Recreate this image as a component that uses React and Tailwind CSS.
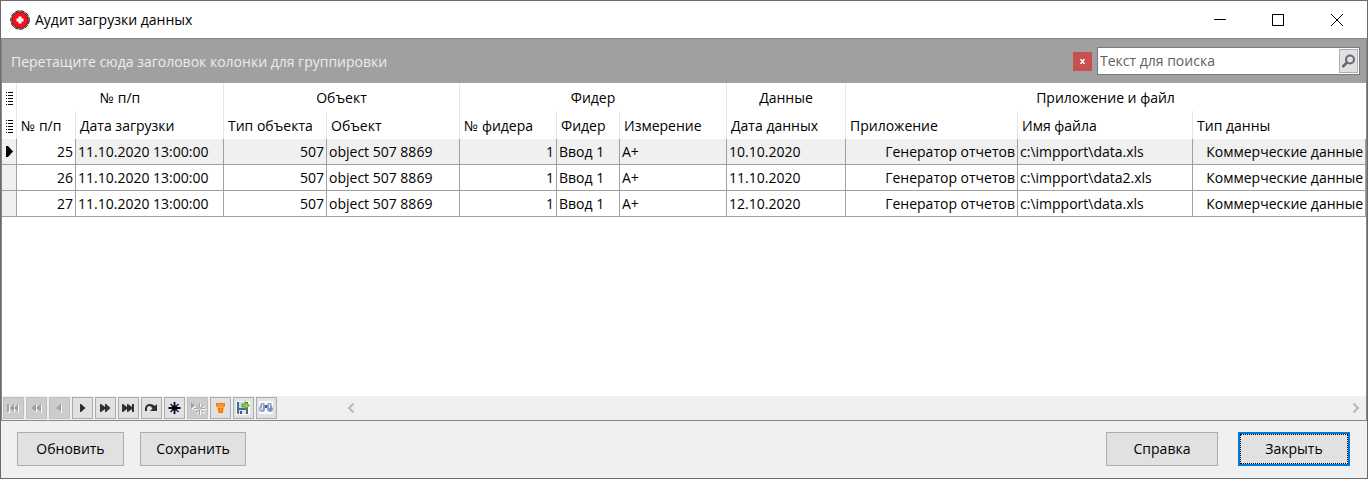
import { useState } from 'react';

const groups = [
  { title: '№ п/п', span: 2 },
  { title: 'Объект', span: 2 },
  { title: 'Фидер', span: 3 },
  { title: 'Данные', span: 1 },
  { title: 'Приложение и файл', span: 3 },
];

const columns = [
  { key: 'id', title: '№ п/п', width: 'w-[59px]', right: true },
  { key: 'loaded', title: 'Дата загрузки', width: 'w-[148px]' },
  { key: 'objectType', title: 'Тип объекта', width: 'w-[103px]', right: true },
  { key: 'object', title: 'Объект', width: 'w-[133px]' },
  { key: 'feederNo', title: '№ фидера', width: 'w-[97px]', right: true },
  { key: 'feeder', title: 'Фидер', width: 'w-[63px]' },
  { key: 'measure', title: 'Измерение', width: 'w-[107px]' },
  { key: 'dataDate', title: 'Дата данных', width: 'w-[119px]' },
  { key: 'app', title: 'Приложение', width: 'w-[172px]', right: true },
  { key: 'file', title: 'Имя файла', width: 'w-[175px]' },
  { key: 'dataType', title: 'Тип данны', width: '', right: true },
];

const common = {
  loaded: '11.10.2020 13:00:00',
  objectType: 507,
  object: 'object 507 8869',
  feederNo: 1,
  feeder: 'Ввод 1',
  measure: 'A+',
  app: 'Генератор отчетов',
  dataType: 'Коммерческие данные',
};

const rows = [
  { ...common, id: 25, dataDate: '10.10.2020', file: 'c:\\impport\\data.xls' },
  { ...common, id: 26, dataDate: '11.10.2020', file: 'c:\\impport\\data2.xls' },
  { ...common, id: 27, dataDate: '12.10.2020', file: 'c:\\impport\\data.xls' },
];

function Icon({ children }) {
  return (
    <svg width="19" height="20" viewBox="0 0 19 20" fill="currentColor" aria-hidden="true">
      {children}
    </svg>
  );
}

// Greyed out arrows get a white edge on the right and bottom side
function EmbossedPath({ d }) {
  return (
    <g>
      <path d={d} fill="#fff" transform="translate(1 1)" />
      <path d={d} />
    </g>
  );
}

const navButtons = [
  { label: 'Первая запись', disabled: true, icon: <EmbossedPath d="M3 6h2v8H3zM10 6v8l-4.500-4zM14 6v8l-4-4z" /> },
  { label: 'Предыдущая страница', disabled: true, icon: <EmbossedPath d="M9 6v8l-5-4zM14 6v8l-5-4z" /> },
  { label: 'Предыдущая запись', disabled: true, icon: <EmbossedPath d="M11 6v8l-5-4z" /> },
  { label: 'Следующая запись', icon: <path d="M7 6v8h1l4.500-4L8 6z" /> },
  { label: 'Следующая страница', icon: <path d="M4 6v8h1l4-3v3h1l4.500-4L10 6H9v3L5 6z" /> },
  { label: 'Последняя запись', icon: <path d="M3 6v8h1l4-3v3h1l4-3v3h2V6h-2v3L9 6H8v3L4 6z" /> },
  {
    label: 'Обновить запись',
    icon: <path d="M3 13v-2c0-3 2-5 5-5 2 0 4 1 5 2l2-2v7H8l2.500-2.500C9.500 9 8.500 8 7.500 8 6 8 5 9 5 11v2z" />,
  },
  {
    label: 'Добавить запись',
    icon: (
      <g>
        <path d="M5.500 6l8 8M13.500 6l-8 8" stroke="#000080" strokeWidth="1.200" />
        <path d="M9.500 4v12M3.500 10h12" stroke="#000" strokeWidth="1.800" />
        <circle cx="9.500" cy="10" r="2.500" fill="#000" />
      </g>
    ),
  },
  {
    label: 'Отменить добавление',
    disabled: true,
    icon: (
      <g>
        <EmbossedPath d="M3 4v7l4-3.500z" />
        <path d="M12.500 6v11M7 11.500h11M9 8l8 8M17 8l-8 8" stroke="#fff" />
        <path d="M11.500 5v11M6 10.500h11M8 7l7 7M15 7l-7 7" stroke="currentColor" />
        <circle cx="11.500" cy="10.500" r="1.500" fill="#ccc" />
      </g>
    ),
  },
  {
    label: 'Фильтр',
    icon: (
      <g>
        <path d="M5 5h9v3l-1.500 1.500L12 15H7.500L6.500 9.500 5 8z" fill="#f57900" />
        <path d="M6 6h7v1.500H6z" fill="#ff9a35" />
        <path d="M6.500 8.500h6v1h-6z" fill="#ffd09a" />
        <path d="M8.500 10.500h2V14h-2z" fill="#ff9425" />
      </g>
    ),
  },
  {
    label: 'Экспорт',
    icon: (
      <g>
        <rect x="2" y="3" width="14" height="14" fill="#f8f8f8" />
        <path d="M3 4h11v12H4l-1-1z" fill="#4c6890" />
        <path d="M5 4h6v6H5z" fill="#c8daf0" />
        <path d="M5 12h7v4H5z" fill="#dfe5ed" />
        <path d="M6 13h2v3H6z" fill="#3f597e" />
        <path d="M8 6h3V3.500L15.500 7.500 11 11.500V9H8z" fill="#8fce43" stroke="#4d9420" strokeWidth=".8" />
      </g>
    ),
  },
  {
    label: 'Поиск',
    icon: (
      <g>
        <rect x="2" y="3" width="14" height="13" fill="#fafafd" />
        <path d="M4 5h3l1 2h2l1-2h3l2 6c0 2-1 3-3 3s-3-1-3-3v-1H8v1c0 2-1 3-3 3s-3-1-3-3z" fill="#8ba0c4" />
        <path d="M5 6h1v5H5zM12 6h1v5h-1z" fill="#e4ecfa" />
        <path d="M8 7h2v3H8z" fill="#465c86" />
        <circle cx="4.500" cy="11" r="1.500" fill="#c3d3ef" />
        <circle cx="13.500" cy="11" r="1.500" fill="#6d8bc0" />
      </g>
    ),
  },
];

function ColumnMenuIcon() {
  return (
    <svg width="8" height="13" viewBox="0 0 8 13" shapeRendering="crispEdges" aria-hidden="true">
      {[0, 3, 6, 9, 12].map((y) => (
        <path key={y} d={`M0 ${y}h1v1H0zM2 ${y}h5v1H2z`} />
      ))}
    </svg>
  );
}

function TitleBar() {
  return (
    <header className="flex h-[37px] items-center bg-white pr-px pl-[9px]">
      <svg width="20" height="20" viewBox="0 0 20 20" aria-hidden="true">
        <circle cx="10" cy="10" r="9.500" fill="#9a9a9a" />
        <circle cx="10" cy="10" r="9.300" fill="none" stroke="#252525" strokeDasharray="4 1.500" />
        <circle cx="10" cy="10" r="8" fill="#ee141b" stroke="#a80c12" />
        <path d="M8.500 6.500h3v2h2v3h-2v2h-3v-2h-2v-3h2z" fill="#fff" />
      </svg>
      <h1 className="ml-[5px] flex-1">Аудит загрузки данных</h1>
      <button aria-label="Свернуть" className="flex h-full w-[58px] items-center justify-center">
        <svg width="12" height="12" shapeRendering="crispEdges"><path d="M0 5h12v1H0z" /></svg>
      </button>
      <button aria-label="Развернуть" className="flex h-full w-[58px] items-center justify-center">
        <svg width="12" height="12" shapeRendering="crispEdges">
          <path d="M.5.500h11v11H.5z" fill="none" stroke="#000" />
        </svg>
      </button>
      <button aria-label="Закрыть окно" className="flex h-full w-[59px] items-center justify-center">
        <svg width="12" height="12"><path d="M0 0l12 12M12 0L0 12" stroke="#000" /></svg>
      </button>
    </header>
  );
}

function GroupPanel() {
  const [search, setSearch] = useState('');

  return (
    <div className="flex h-11 items-center bg-[#a0a0a0] pr-1.5 pl-[9px]">
      <p className="flex-1 pt-0.5 text-[#ececec]">Перетащите сюда заголовок колонки для группировки</p>
      <button
        aria-label="Очистить"
        onClick={() => setSearch('')}
        className="mr-[5px] flex h-[19px] w-[19px] items-center justify-center bg-[#c75050]"
      >
        <svg width="5" height="5" viewBox="0 0 5 5"><path d="M.5 0l4 5M4.500 0l-4 5" stroke="#fff" strokeWidth="1.500" /></svg>
      </button>
      <div className="flex h-7 w-[263px] border border-[#7a7a7a] bg-white p-px">
        <input
          aria-label="Текст для поиска"
          placeholder="Текст для поиска"
          value={search}
          onChange={(e) => setSearch(e.target.value)}
          className="min-w-0 flex-1 px-px outline-none placeholder:text-[#5f5f5f]"
        />
        <button aria-label="Найти" className="flex w-[19px] items-center justify-center border border-[#adadad] bg-[#e1e1e1]">
          <svg width="15" height="15" viewBox="0 0 15 15" fill="none" stroke="#666674">
            <circle cx="9" cy="5.500" r="4" strokeWidth="2" />
            <path d="M6 8.500L1.500 13" strokeWidth="2.500" />
          </svg>
        </button>
      </div>
    </div>
  );
}

function AuditTable() {
  return (
    <table className="w-full table-fixed border-separate border-spacing-0 whitespace-nowrap">
      <colgroup>
        <col className="w-[15px]" />
        {columns.map((col) => (
          <col key={col.key} className={col.width} />
        ))}
      </colgroup>
      <thead>
        <tr className="h-7">
          <th className="border-r border-[#e5e5e5] p-0 pt-0.5 pl-1"><ColumnMenuIcon /></th>
          {groups.map((group) => (
            <th key={group.title} colSpan={group.span} className="border-r border-[#e5e5e5] p-0 pt-0.5 text-center font-normal last:border-white">
              {group.title}
            </th>
          ))}
        </tr>
        <tr className="h-7">
          <th className="border-r border-[#e5e5e5] p-0 pt-0.5 pl-1"><ColumnMenuIcon /></th>
          {columns.map((col) => (
            <th key={col.key} className="overflow-hidden border-r border-[#e5e5e5] p-0 pt-0.5 pl-1 text-left font-normal last:border-white">
              {col.title}
            </th>
          ))}
        </tr>
      </thead>
      <tbody>
        {rows.map((row, i) => (
          <tr key={row.id} className="h-[26px]">
            <td className="border-r border-b border-[#a0a0a0] bg-[#f0f0f0] p-0 pl-1">
              {i === 0 && (
                <svg width="7" height="11" viewBox="0 0 7 11" aria-hidden="true"><path d="M0 0h2l5 5.500L2 11H0z" /></svg>
              )}
            </td>
            {columns.map((col, j) => (
              <td
                key={col.key}
                className={`border-r border-b border-[#a0a0a0] p-0 ${col.right ? 'pr-0.5 text-right' : 'pl-0.5'} ${
                  i === 0 && j > 0 ? 'bg-[#f0f0f0]' : ''
                }`}
              >
                {row[col.key]}
              </td>
            ))}
          </tr>
        ))}
      </tbody>
    </table>
  );
}

function Navigator() {
  return (
    <div className="flex h-6 items-center bg-[#f0f0f0]">
      <div className="flex w-[339px] gap-0.5 pl-px">
        {navButtons.map((btn) => (
          <button
            key={btn.label}
            aria-label={btn.label}
            disabled={btn.disabled}
            className="h-[22px] w-[21px] border border-[#adadad] bg-[#e1e1e1] text-[#303030] disabled:border-[#bfbfbf] disabled:bg-[#cccccc] disabled:text-[#a0a0a0]"
          >
            <Icon>{btn.icon}</Icon>
          </button>
        ))}
      </div>
      <div className="flex flex-1 justify-between px-1.5 text-[#b8b8b8]">
        <button aria-label="Прокрутить влево">
          <svg width="8" height="10" fill="none" stroke="currentColor" strokeWidth="2"><path d="M6.500.500L2 5l4.500 4.500" /></svg>
        </button>
        <button aria-label="Прокрутить вправо">
          <svg width="8" height="10" fill="none" stroke="currentColor" strokeWidth="2"><path d="M1.500.500L6 5 1.500 9.500" /></svg>
        </button>
      </div>
    </div>
  );
}

function FooterButton({ className, children }) {
  return <button className={`h-[34px] bg-[#e1e1e1] ${className}`}>{children}</button>;
}

function App() {
  return (
    <div className="flex min-h-screen flex-col border border-[#6b6b6b] bg-[#f0f0f0] font-['Open_Sans','Noto_Sans',sans-serif] text-[14px] leading-5 text-black">
      <TitleBar />
      <main className="flex flex-1 flex-col border border-[#828790] bg-white">
        <GroupPanel />
        <div className="flex-1">
          <AuditTable />
        </div>
        <Navigator />
      </main>
      <footer className="flex h-[57px] items-center pr-[17px] pb-0.5 pl-4">
        <FooterButton className="w-[107px] border border-[#adadad]">Обновить</FooterButton>
        <FooterButton className="ml-4 w-[106px] border border-[#adadad]">Сохранить</FooterButton>
        <FooterButton className="ml-auto w-28 border border-[#adadad]">Справка</FooterButton>
        <FooterButton className="ml-5 w-28 border-2 border-[#0078d7] outline-1 -outline-offset-3 outline-dotted outline-black">
          Закрыть
        </FooterButton>
      </footer>
    </div>
  );
}

export default App;
